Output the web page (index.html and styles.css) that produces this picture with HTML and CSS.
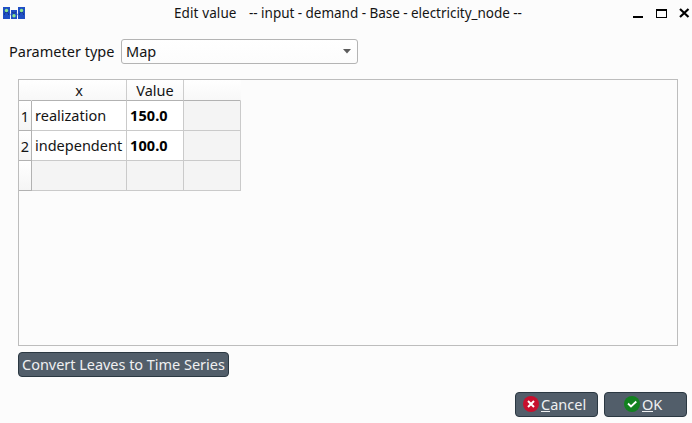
FILE: index.html
```html
<!DOCTYPE html>
<html lang="en">
<head>
<meta charset="utf-8">
<title>Edit value</title>
<link rel="stylesheet" href="styles.css">
</head>
<body>
<div class="window">
  <header class="titlebar">
    <svg class="app-icon" width="22" height="12" viewBox="0 0 22 12">
      <path fill="#1f4fc4" d="M0 0h7v12H0zM8 3h6v9H8zM15 0h7v12h-7z"/>
      <path stroke="#86a3dd" d="M7 7.500h1M14 7.500h1" stroke-width="1.500"/>
      <path stroke="#143a8c" fill="none" d="M1.500 8V6.500Q1.500 5.500 3.500 5.500T5.500 6.500V8M16.500 8V6.500Q16.500 5.500 18.500 5.500T20.500 6.500V8M9 5q2 2.500 4 0"/>
      <circle cx="3.500" cy="3.500" r="1.700" fill="#8be58b"/>
      <circle cx="11" cy="8.700" r="1.700" fill="#8be58b"/>
      <circle cx="18.500" cy="3.500" r="1.700" fill="#8be58b"/>
    </svg>
    <h1 class="title"><span class="title-name">Edit value</span><span class="title-path">-- input - demand - Base - electricity_node --</span></h1>
    <svg class="controls" width="58" height="12" viewBox="0 0 58 12">
      <path d="M0 9h10v2H0z"/>
      <path fill-rule="evenodd" d="M23 2h11v9H23zM24 4v6h9V4z"/>
      <path d="M47 2l8.500 8M55.500 2l-8.500 8" stroke="#000" stroke-width="2.200"/>
    </svg>
  </header>
  <div class="param-row">
    <label class="param-label">Parameter type</label>
    <div class="combo"><span class="combo-text">Map</span>
      <svg width="8" height="5" viewBox="0 0 8 5"><path fill="#5c5c5c" d="M0 0h8L4 4.500z"/></svg>
    </div>
  </div>
  <main class="table-view">
    <div class="grid">
      <div class="head corner"></div><div class="head">x</div><div class="head">Value</div><div class="head last"></div>
      <div class="num">1</div><div class="cell">realization</div><div class="cell bold">150.0</div><div class="cell empty"></div>
      <div class="num">2</div><div class="cell">independent</div><div class="cell bold">100.0</div><div class="cell empty"></div>
      <div class="num"></div><div class="cell empty"></div><div class="cell empty"></div><div class="cell empty"></div>
    </div>
  </main>
  <button class="btn convert">Convert Leaves to Time Series</button>
  <footer class="actions">
    <button class="btn action cancel">
      <svg width="16" height="16" viewBox="0 0 16 16"><circle cx="8" cy="8" r="8" fill="#c8102e"/><path d="M5 5l6 6M11 5l-6 6" stroke="#fff" stroke-width="2"/></svg>
      <span class="caption"><span class="key">C</span>ancel</span>
    </button>
    <button class="btn action ok">
      <svg width="16" height="16" viewBox="0 0 16 16"><circle cx="8" cy="8" r="8" fill="#12811f"/><path d="M4 7.500l3 3 5.300-5" fill="none" stroke="#fff" stroke-width="1.800"/></svg>
      <span class="caption"><span class="key">O</span>K</span>
    </button>
  </footer>
</div>
</body>
</html>
```
FILE: styles.css
```css
* { box-sizing: border-box; }
body { margin: 0; background: #fcfcfc; color: #141414; font: 14.5px/20px "Noto Sans", sans-serif; white-space: nowrap; }
svg { display: block; flex: none; }
.window { width: 692px; height: 423px; display: flex; flex-direction: column; align-items: flex-start; }
.titlebar { width: 100%; height: 39px; padding: 0 1px 0 3px; display: flex; align-items: flex-start; }
.app-icon { margin-top: 7px; }
.title { flex: 1; margin: 3px 0 0; padding-left: 149px; font-size: 13.5px; font-weight: 400; display: flex; }
.title-name { width: 75px; letter-spacing: 0.1px; }
.title-path { letter-spacing: -0.03px; }
.controls { margin-top: 7px; }
.param-row { height: 40px; display: flex; padding-left: 9px; align-items: flex-start; }
.param-label { width: 112px; padding-top: 2px; }
.combo { width: 237px; height: 25px; border: 1px solid #b4b4b4; border-radius: 3px; padding: 0 6px 0 4px; display: flex; align-items: center; justify-content: space-between; background: linear-gradient(#fff, #fcfcfc); }
.combo-text { padding-bottom: 2px; }
.table-view { width: 660px; height: 267px; margin-left: 18px; border: 1px solid #bdbdbd; }
.grid { display: grid; grid-template-columns: 13px 95px 57px 57px; grid-template-rows: 21px 30px 30px 30px; margin-top: -1px; width: 222px; border-top: 1px solid #bdbdbd; }
.head { display: flex; align-items: center; justify-content: center; border-right: 1px solid #cdcdcd; border-bottom: 1px solid #b2b2b2; background: linear-gradient(#fff, #f8f8f8); }
.corner, .last { border-right-color: transparent; }
.num { display: flex; align-items: center; justify-content: center; border-right: 1px solid #b2b2b2; border-bottom: 1px solid #b2b2b2; background: linear-gradient(#fff, #f5f5f5); }
.cell { display: flex; align-items: center; padding: 0 0 2px 3px; border-right: 1px solid #cacaca; border-bottom: 1px solid #cacaca; background: #fff; }
.empty { background: #f4f4f4; }
.bold { font-weight: 700; color: #000; letter-spacing: 0.1px; }
.btn { display: flex; align-items: center; font: inherit; color: #eff0f1; background: #525e6a; border: 1px solid #2b3842; border-radius: 4px; height: 25px; padding: 0; }
.convert { width: 211px; margin: 6px 0 0 18px; padding: 0 0 2px 3px; letter-spacing: -0.03px; }
.actions { margin: 15px 0 0 515px; display: flex; gap: 6px; }
.action { width: 83px; gap: 2px; }
.action svg { margin-bottom: 1px; }
.caption { padding-bottom: 1px; }
.cancel { padding-left: 7px; }
.ok { padding-left: 19px; }
.key { display: inline-block; height: 18px; vertical-align: top; border-bottom: 1px solid #eff0f1; }
```
